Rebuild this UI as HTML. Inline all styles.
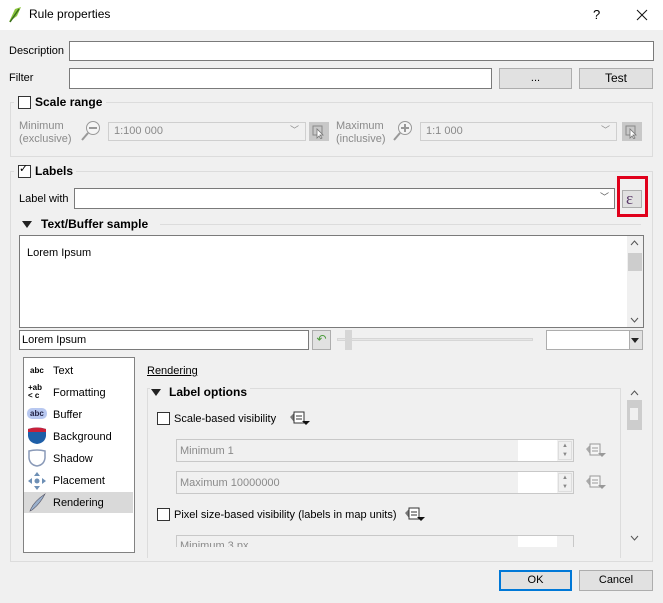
<!DOCTYPE html>
<html><head><meta charset="utf-8"><style>
*{box-sizing:border-box;margin:0;padding:0}
body{width:663px;height:603px;background:#f0f0f0;font-family:"Liberation Sans",sans-serif;font-size:11px;color:#000;position:relative;overflow:hidden}
.a{position:absolute}
.t{position:absolute;white-space:nowrap;line-height:13px}
.in{position:absolute;background:#fff;border:1px solid #7a7a7a}
.dis{position:absolute;background:#f0f0f0;border:1px solid #cfcfcf}
.btn{position:absolute;background:#e1e1e1;border:1px solid #adadad;text-align:center;line-height:19px}
.cb{position:absolute;width:13px;height:13px;border:1px solid #333;background:#fff}
.grp{position:absolute;border:1px solid #dcdcdc}
.b{font-weight:bold}
.g{color:#8a8a8a}
.tri{position:absolute;width:0;height:0;border-left:5px solid transparent;border-right:5px solid transparent;border-top:7px solid #222}
.ic{position:absolute;width:22px;height:16px}
</style></head><body>
<div class="a" style="left:0;top:0;width:663px;height:30px;background:#fff"></div>
<svg class="a" style="left:7px;top:6px" width="16" height="18"><path d="M2 16 L8 3 L14 1 L10 10 Z" fill="#8cc63f"/><path d="M3 16 L12 3" stroke="#3a6e1a" stroke-width="1.5"/></svg>
<div class="t" style="left:29px;top:8px;font-size:12px">Rule properties</div>
<div class="t" style="left:593px;top:8px;font-size:13px">?</div>
<svg class="a" style="left:636px;top:9px" width="12" height="12"><path d="M1 1L11 11M11 1L1 11" stroke="#111" stroke-width="1"/></svg>

<div class="t" style="left:9px;top:45px">Description</div>
<div class="in" style="left:69px;top:41px;width:585px;height:20px"></div>
<div class="t" style="left:9px;top:72px">Filter</div>
<div class="in" style="left:69px;top:68px;width:423px;height:21px"></div>
<div class="btn" style="left:499px;top:68px;width:73px;height:21px">...</div>
<div class="btn" style="left:579px;top:68px;width:74px;height:21px;font-size:12px">Test</div>

<div class="grp" style="left:10px;top:102px;width:643px;height:55px"></div>
<div class="a" style="left:14px;top:94px;width:92px;height:16px;background:#f0f0f0"></div>
<div class="cb" style="left:18px;top:96px"></div>
<div class="t b" style="left:35px;top:96px;font-size:12px">Scale range</div>
<div class="t g" style="left:19px;top:120px">Minimum<br>(exclusive)</div>
<svg class="a" style="left:80px;top:120px" width="22" height="22"><circle cx="13" cy="8" r="6.5" fill="#f5f5f5" stroke="#999"/><rect x="9" y="7" width="8" height="2" fill="#999"/><path d="M8 13 L2 20" stroke="#999" stroke-width="2"/></svg>
<div class="dis" style="left:108px;top:122px;width:198px;height:19px"></div>
<div class="t g" style="left:114px;top:125px">1:100 000</div>
<div class="t g" style="left:290px;top:124px;font-size:9px">﹀</div>
<div class="a" style="left:309px;top:122px;width:20px;height:19px;background:#c8c8c8"></div>
<svg class="a" style="left:312px;top:125px" width="14" height="14"><rect x="1" y="1" width="9" height="9" fill="none" stroke="#888"/><path d="M5 4 L5 13 L7 11 L9 14 L10 13 L8 10 L11 10Z" fill="#fff" stroke="#777" stroke-width=".8"/></svg>
<div class="t g" style="left:336px;top:120px">Maximum<br>(inclusive)</div>
<svg class="a" style="left:392px;top:120px" width="22" height="22"><circle cx="13" cy="8" r="6.5" fill="#f5f5f5" stroke="#999"/><rect x="9" y="7" width="8" height="2" fill="#999"/><rect x="12" y="4" width="2" height="8" fill="#999"/><path d="M8 13 L2 20" stroke="#999" stroke-width="2"/></svg>
<div class="dis" style="left:420px;top:122px;width:197px;height:19px"></div>
<div class="t g" style="left:426px;top:125px">1:1 000</div>
<div class="t g" style="left:601px;top:124px;font-size:9px">﹀</div>
<div class="a" style="left:622px;top:122px;width:20px;height:19px;background:#c8c8c8"></div>
<svg class="a" style="left:625px;top:125px" width="14" height="14"><rect x="1" y="1" width="9" height="9" fill="none" stroke="#888"/><path d="M5 4 L5 13 L7 11 L9 14 L10 13 L8 10 L11 10Z" fill="#fff" stroke="#777" stroke-width=".8"/></svg>

<div class="grp" style="left:10px;top:171px;width:643px;height:391px"></div>
<div class="a" style="left:14px;top:163px;width:62px;height:16px;background:#f0f0f0"></div>
<div class="cb" style="left:18px;top:165px"></div>
<div class="t" style="left:19px;top:163px;font-size:11px">✓</div>
<div class="t b" style="left:35px;top:165px;font-size:12px">Labels</div>
<div class="t" style="left:19px;top:193px">Label with</div>
<div class="in" style="left:74px;top:188px;width:541px;height:21px"></div>
<div class="t" style="left:600px;top:191px;font-size:9px;color:#555">﹀</div>
<div class="a" style="left:617px;top:176px;width:31px;height:41px;border:3px solid #e0001b"></div>
<div class="a" style="left:622px;top:190px;width:20px;height:18px;background:#e1e1e1;border:1px solid #adadad"></div>
<div class="t" style="left:626px;top:190px;font-size:17px;line-height:17px;color:#5a3a6a;font-family:'Liberation Serif',serif">ε</div>

<div class="tri" style="left:22px;top:221px"></div>
<div class="t b" style="left:41px;top:218px;font-size:12px">Text/Buffer sample</div>
<div class="a" style="left:160px;top:224px;width:481px;height:1px;background:#dcdcdc"></div>
<div class="in" style="left:19px;top:235px;width:625px;height:93px"></div>
<div class="t" style="left:27px;top:247px">Lorem Ipsum</div>
<div class="a" style="left:627px;top:236px;width:16px;height:91px;background:#f0f0f0"></div>
<div class="a" style="left:628px;top:253px;width:14px;height:18px;background:#cdcdcd"></div>
<svg class="a" style="left:630px;top:240px" width="9" height="6"><path d="M1 5L4.5 1L8 5" fill="none" stroke="#555"/></svg>
<svg class="a" style="left:630px;top:317px" width="9" height="6"><path d="M1 1L4.5 5L8 1" fill="none" stroke="#555"/></svg>

<div class="in" style="left:19px;top:330px;width:290px;height:20px"></div>
<div class="t" style="left:22px;top:334px">Lorem Ipsum</div>
<div class="a" style="left:312px;top:330px;width:19px;height:20px;background:#e1e1e1;border:1px solid #adadad;color:#4a9a3a;text-align:center;font-size:12px;line-height:17px">↶</div>
<div class="a" style="left:337px;top:338px;width:196px;height:3px;background:#e6e6e6;border:1px solid #d6d6d6"></div>
<div class="a" style="left:345px;top:330px;width:7px;height:20px;background:#d6d6d6"></div>
<div class="a" style="left:546px;top:330px;width:84px;height:20px;background:#fff;border:1px solid #adadad"></div>
<div class="a" style="left:629px;top:330px;width:14px;height:20px;background:#e1e1e1;border:1px solid #adadad"></div>
<div class="tri" style="left:631px;top:338px;border-left-width:4px;border-right-width:4px;border-top-width:5px"></div>

<div class="a" style="left:23px;top:357px;width:112px;height:196px;background:#fff;border:1px solid #828282"></div>
<div class="a" style="left:24px;top:492px;width:109px;height:21px;background:#d9d9d9"></div>
<div class="t" style="left:30px;top:364px;font-size:8px;font-weight:bold">abc</div>
<div class="t" style="left:53px;top:365px">Text</div>
<div class="t" style="left:28px;top:384px;font-size:8px;line-height:8px;font-weight:bold">+ab<br>&lt; c</div>
<div class="t" style="left:53px;top:387px">Formatting</div>
<div class="a" style="left:27px;top:408px;width:20px;height:11px;background:#b8c8f0;border-radius:5px"></div>
<div class="t" style="left:30px;top:407px;font-size:8px;font-weight:bold;color:#224">abc</div>
<div class="t" style="left:53px;top:409px">Buffer</div>
<svg class="a" style="left:27px;top:427px" width="20" height="18"><path d="M1 2 Q10 -1 19 2 L19 9 Q18 16 10 17 Q2 16 1 9Z" fill="#1e5fa8"/><path d="M1 2 Q10 -1 19 2 L19 5 L1 5Z" fill="#c8203a"/></svg>
<div class="t" style="left:53px;top:431px">Background</div>
<svg class="a" style="left:27px;top:449px" width="20" height="18"><path d="M2 2 Q10 0 18 2 L18 9 Q17 16 10 17 Q3 16 2 9Z" fill="#fff" stroke="#8a9ab8" stroke-width="1.5"/></svg>
<div class="t" style="left:53px;top:453px">Shadow</div>
<svg class="a" style="left:27px;top:471px" width="20" height="20"><g fill="#6d8fb5"><path d="M10 1 L13 5 L7 5Z"/><path d="M10 19 L13 15 L7 15Z"/><path d="M1 10 L5 7 L5 13Z"/><path d="M19 10 L15 7 L15 13Z"/><circle cx="10" cy="10" r="2.5"/></g></svg>
<div class="t" style="left:53px;top:475px">Placement</div>
<svg class="a" style="left:27px;top:492px" width="20" height="20"><path d="M3 19 Q6 10 18 2 Q13 12 5 18Z" fill="#9ab0cc" stroke="#556" stroke-width=".6"/></svg>
<div class="t" style="left:53px;top:497px">Rendering</div>

<div class="t" style="left:147px;top:365px;text-decoration:underline">Rendering</div>
<div class="grp" style="left:147px;top:388px;width:474px;height:170px;border-bottom:none"></div>
<div class="a" style="left:150px;top:384px;width:100px;height:14px;background:#f0f0f0"></div>
<div class="tri" style="left:151px;top:389px"></div>
<div class="t b" style="left:169px;top:386px;font-size:12px">Label options</div>
<div class="a" style="left:627px;top:400px;width:16px;height:146px;background:#f0f0f0"></div>
<div class="a" style="left:627px;top:400px;width:15px;height:30px;background:#cdcdcd"></div>
<div class="a" style="left:630px;top:408px;width:8px;height:12px;background:#f0f0f0"></div>
<svg class="a" style="left:630px;top:390px" width="9" height="6"><path d="M1 5L4.5 1L8 5" fill="none" stroke="#555"/></svg>
<svg class="a" style="left:630px;top:535px" width="9" height="6"><path d="M1 1L4.5 5L8 1" fill="none" stroke="#555"/></svg>

<div class="cb" style="left:157px;top:412px"></div>
<div class="t" style="left:174px;top:413px">Scale-based visibility</div>
<svg class="ic" style="left:288px;top:410px"><path d="M2 7 L6 3 L6 12Z" fill="#777"/><rect x="6" y="2" width="10" height="11" fill="#fff" stroke="#333"/><path d="M8 6h6M8 9h6" stroke="#333"/><path d="M14 11 L22 11 L18 15Z" fill="#111"/></svg>

<div class="dis" style="left:176px;top:439px;width:398px;height:23px;border-color:#c8c8c8"></div>
<div class="a" style="left:518px;top:440px;width:39px;height:21px;background:#fff"></div>
<div class="t g" style="left:180px;top:445px">Minimum 1</div>
<div class="a" style="left:558px;top:441px;width:14px;height:19px;border:1px solid #ddd;font-size:6px;color:#888;text-align:center;line-height:9px">▲<br>▼</div>
<svg class="ic" style="left:584px;top:442px"><path d="M2 7 L6 3 L6 12Z" fill="#aaa"/><rect x="6" y="2" width="10" height="11" fill="#f5f5f5" stroke="#999"/><path d="M8 6h6M8 9h6" stroke="#999"/><path d="M14 11 L22 11 L18 15Z" fill="#999"/></svg>

<div class="dis" style="left:176px;top:471px;width:398px;height:23px;border-color:#c8c8c8"></div>
<div class="a" style="left:518px;top:472px;width:39px;height:21px;background:#fff"></div>
<div class="t g" style="left:180px;top:477px">Maximum 10000000</div>
<div class="a" style="left:558px;top:473px;width:14px;height:19px;border:1px solid #ddd;font-size:6px;color:#888;text-align:center;line-height:9px">▲<br>▼</div>
<svg class="ic" style="left:584px;top:474px"><path d="M2 7 L6 3 L6 12Z" fill="#aaa"/><rect x="6" y="2" width="10" height="11" fill="#f5f5f5" stroke="#999"/><path d="M8 6h6M8 9h6" stroke="#999"/><path d="M14 11 L22 11 L18 15Z" fill="#999"/></svg>

<div class="cb" style="left:157px;top:508px"></div>
<div class="t" style="left:174px;top:509px">Pixel size-based visibility (labels in map units)</div>
<svg class="ic" style="left:403px;top:506px"><path d="M2 7 L6 3 L6 12Z" fill="#777"/><rect x="6" y="2" width="10" height="11" fill="#fff" stroke="#333"/><path d="M8 6h6M8 9h6" stroke="#333"/><path d="M14 11 L22 11 L18 15Z" fill="#111"/></svg>
<div class="a" style="left:176px;top:535px;width:398px;height:12px;overflow:hidden">
<div class="dis" style="left:0;top:0;width:398px;height:23px;border-color:#c8c8c8"></div>
<div class="a" style="left:342px;top:1px;width:39px;height:21px;background:#fff"></div>
<div class="t g" style="left:4px;top:5px">Minimum 3 px</div>
</div>

<div class="btn" style="left:499px;top:570px;width:73px;height:21px;border:2px solid #0078d7;line-height:17px">OK</div>
<div class="btn" style="left:579px;top:570px;width:74px;height:21px">Cancel</div>
</body></html>
